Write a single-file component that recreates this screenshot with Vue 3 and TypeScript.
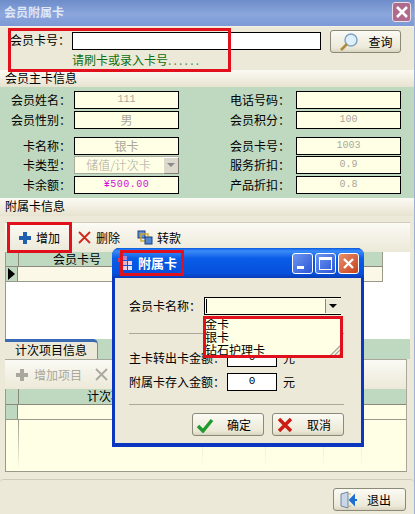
<script setup lang="ts">
type Field = { label: string; value: string; kind?: string };

const leftTop: Field[] = [
  { label: "会员姓名：", value: "111", kind: "mono" },
  { label: "会员性别：", value: "男" },
];
const rightTop: Field[] = [
  { label: "电话号码：", value: "" },
  { label: "会员积分：", value: "100", kind: "mono" },
];
const leftBottom: Field[] = [
  { label: "卡名称：", value: "银卡" },
  { label: "卡类型：", value: "储值/计次卡", kind: "combo" },
  { label: "卡余额：", value: "¥500.00", kind: "money" },
];
const rightBottom: Field[] = [
  { label: "会员卡号：", value: "1003", kind: "mono" },
  { label: "服务折扣：", value: "0.9", kind: "mono" },
  { label: "产品折扣：", value: "0.8", kind: "mono" },
];
const cardNames = ["金卡", "银卡", "钻石护理卡"];
// column rules that fade out at the bottom of the lower grid
const lowerColumns = [196, 259, 317, 355];
</script>

<template>
  <div class="win">
    <div class="titlebar">
      <span class="title-text">会员附属卡</span>
      <span class="close-main">
        <svg width="14" height="14" viewBox="0 0 14 14"><path d="M2 2 L12 12 M12 2 L2 12" stroke="#fff" stroke-width="2.6" /></svg>
      </span>
    </div>

    <div class="search">
      <div class="search-row">
        <span class="search-label">会员卡号：</span>
        <div class="search-input"></div>
        <button class="btn search-btn">
          <svg width="22" height="20" viewBox="0 0 22 20">
            <circle cx="13" cy="8" r="6" fill="#dff0fa" stroke="#7fa6c4" stroke-width="1.5" />
            <path d="M9 12 L3 18" stroke="#b08a3c" stroke-width="2.6" />
          </svg>
          <span>查询</span>
        </button>
      </div>
      <div class="hint">请刷卡或录入卡号<span class="dots">......</span></div>
    </div>

    <div class="section">会员主卡信息</div>
    <div class="main-info">
      <div class="info-col">
        <div class="info-group">
          <div v-for="f in leftTop" :key="f.label" class="info-row">
            <span class="info-label">{{ f.label }}</span>
            <span class="info-value" :class="f.kind">{{ f.value }}</span>
          </div>
        </div>
        <div class="info-group tight">
          <div v-for="f in leftBottom" :key="f.label" class="info-row">
            <span class="info-label">{{ f.label }}</span>
            <span class="info-value" :class="f.kind">
              {{ f.value }}
              <i v-if="f.kind === 'combo'" class="combo-arrow"></i>
            </span>
          </div>
        </div>
      </div>
      <div class="info-col right">
        <div class="info-group">
          <div v-for="f in rightTop" :key="f.label" class="info-row">
            <span class="info-label">{{ f.label }}</span>
            <span class="info-value" :class="f.kind">{{ f.value }}</span>
          </div>
        </div>
        <div class="info-group tight">
          <div v-for="f in rightBottom" :key="f.label" class="info-row">
            <span class="info-label">{{ f.label }}</span>
            <span class="info-value" :class="f.kind">{{ f.value }}</span>
          </div>
        </div>
      </div>
    </div>

    <div class="section sub">附属卡信息</div>
    <div class="toolbar top-tools">
      <span class="tool">
        <svg width="14" height="14" viewBox="0 0 14 14"><path d="M5 1 H9 V5 H13 V9 H9 V13 H5 V9 H1 V5 H5 Z" fill="#1f5fb0" /></svg>
        <span>增加</span>
      </span>
      <span class="tool">
        <svg width="15" height="15" viewBox="0 0 15 15"><path d="M2 2 L13 13 M13 2 L2 13" stroke="#d0281c" stroke-width="1.8" /></svg>
        <span>删除</span>
      </span>
      <span class="tool">
        <svg width="16" height="15" viewBox="0 0 16 15">
          <rect x="1" y="1" width="7" height="7" fill="#5f8fd4" stroke="#1f3f80" />
          <rect x="4" y="4" width="7" height="7" fill="none" stroke="#d8a81c" stroke-width="1.4" />
          <rect x="8" y="7" width="7" height="7" fill="#4f86d0" stroke="#1f3f80" />
        </svg>
        <span>转款</span>
      </span>
    </div>
    <div class="grid upper">
      <div class="grid-head"><i class="corner"></i><span class="col-a">会员卡号</span></div>
      <div class="grid-row"><i class="row-mark"><b class="arrow"></b></i></div>
    </div>

    <div class="tabs"><span class="tab">计次项目信息</span></div>
    <div class="toolbar lower-tools">
      <span class="tool off">
        <svg width="14" height="14" viewBox="0 0 14 14"><path d="M5 1 H9 V5 H13 V9 H9 V13 H5 V9 H1 V5 H5 Z" fill="#a9a89f" /></svg>
        <span>增加项目</span>
      </span>
      <span class="tool off">
        <svg width="15" height="15" viewBox="0 0 15 15"><path d="M2 2 L13 13 M13 2 L2 13" stroke="#a9a89f" stroke-width="1.8" /></svg>
        <span>删除</span>
      </span>
    </div>
    <div class="grid lower">
      <div class="grid-head"><i class="corner"></i><span class="col-b">计次项目</span></div>
      <div class="grid-row"><i class="row-mark"></i></div>
      <div class="row-rule"></div>
      <div v-for="x in lowerColumns" :key="x" class="row-rule pale" :style="{ left: x + 'px' }"></div>
    </div>

    <div class="footer">
      <button class="btn exit-btn">
        <svg width="20" height="18" viewBox="0 0 20 18">
          <path d="M2 3 L9 1 V17 L2 15 Z" fill="#c9d6e6" stroke="#6f86a8" />
          <path d="M10 3 H12 M10 15 H12" stroke="#d8a81c" />
          <path d="M18 9 H13 M15 5 L11 9 L15 13 Z" fill="#1f6fd0" stroke="#1f6fd0" stroke-width="2" />
        </svg>
        <span>退出</span>
      </button>
    </div>

    <div class="dialog">
      <div class="dlg-title">
        <svg width="16" height="16" viewBox="0 0 16 16">
          <rect x="1" y="3" width="4" height="4" fill="#d8365a" />
          <rect x="6" y="1" width="4" height="4" fill="#b08ac8" />
          <rect x="6" y="6" width="4" height="4" fill="#e6b4cc" />
          <rect x="11" y="6" width="4" height="4" fill="#f0d0e0" />
          <rect x="6" y="11" width="4" height="4" fill="#f0d0e0" />
          <rect x="11" y="11" width="4" height="4" fill="#dfe6f5" />
        </svg>
        <span class="dlg-name">附属卡</span>
        <span class="caps">
          <i class="cap"><b class="cap-min"></b></i>
          <i class="cap"><b class="cap-max"></b></i>
          <i class="cap cap-close">
            <svg width="13" height="13" viewBox="0 0 13 13"><path d="M2 2 L11 11 M11 2 L2 11" stroke="#fff" stroke-width="2.4" /></svg>
          </i>
        </span>
      </div>
      <div class="dlg-body">
        <div class="dlg-line name-line">
          <span class="dlg-label narrow">会员卡名称：</span>
          <div class="dlg-combo">
            <i class="caret"></i>
            <i class="dlg-arrow"></i>
            <div class="drop">
              <div v-for="n in cardNames" :key="n">{{ n }}</div>
              <svg class="grip" width="14" height="14" viewBox="0 0 14 14"><path d="M14 1 L1 14 M14 5 L5 14 M14 9 L9 14" stroke="#a8a89c" stroke-width="1.4" /></svg>
            </div>
          </div>
        </div>
        <div class="rule first-rule"></div>
        <div class="dlg-line amount">
          <span class="dlg-label">主卡转出卡金额：</span>
          <span class="amount-box">0</span>
          <span class="unit">元</span>
        </div>
        <div class="dlg-line amount">
          <span class="dlg-label">附属卡存入金额：</span>
          <span class="amount-box">0</span>
          <span class="unit">元</span>
        </div>
        <div class="rule second-rule"></div>
        <div class="dlg-actions">
          <button class="btn dlg-btn">
            <svg width="18" height="16" viewBox="0 0 18 16"><path d="M2 9 L7 14 L16 3" fill="none" stroke="#1f9a2c" stroke-width="3.4" /></svg>
            <span>确定</span>
          </button>
          <button class="btn dlg-btn">
            <svg width="18" height="16" viewBox="0 0 18 16"><path d="M3 2 L15 14 M15 2 L3 14" stroke="#cc1c14" stroke-width="3.4" /></svg>
            <span>取消</span>
          </button>
        </div>
      </div>
    </div>

    <i class="mark mark-search"></i>
    <i class="mark mark-add"></i>
    <i class="mark mark-title"></i>
    <i class="mark mark-list"></i>
  </div>
</template>

<style scoped>
.win {
  position: relative;
  width: 415px;
  height: 514px;
  box-sizing: border-box;
  overflow: hidden;
  display: flex;
  flex-direction: column;
  background: #ece9d8;
  border-right: 1px solid #9fb0d4;
  color: #000;
  font: 12px/14px "Noto Sans CJK SC", "Liberation Sans", sans-serif;
}
.titlebar {
  flex: 0 0 26px;
  display: flex;
  align-items: center;
  justify-content: space-between;
  padding: 0 3px 2px 4px;
  box-sizing: border-box;
  background: linear-gradient(#6d8cc9, #8ba6dc 55%, #7d99d6);
}
.title-text {
  color: #dfe6f6;
  font-size: 12px;
  font-weight: 700;
}
.close-main {
  width: 19px;
  height: 20px;
  box-sizing: border-box;
  display: flex;
  align-items: center;
  justify-content: center;
  border: 1px solid #e8dfe6;
  border-radius: 3px;
  background: #b06a8c;
}
.search {
  flex: 0 0 44px;
  box-sizing: border-box;
  padding: 4px 13px 0 10px;
  border-top: 1px solid #f4f2e8;
}
.search-row {
  display: flex;
  align-items: flex-start;
  height: 21px;
}
.search-label {
  width: 62px;
  padding-top: 2px;
}
.search-input {
  width: 249px;
  height: 18px;
  box-sizing: border-box;
  margin-top: 1px;
  border: 1px solid #000;
  background: #fff;
}
.search-btn {
  width: 71px;
  height: 23px;
  margin-left: 9px;
  margin-top: -1px;
  padding-left: 3px;
  justify-content: flex-start;
  gap: 8px;
}
.hint {
  margin: 1px 0 0 62px;
  color: #0a7010;
}
.dots {
  letter-spacing: 2.2px;
  color: #5f8f60;
}
.btn {
  display: flex;
  align-items: center;
  justify-content: center;
  padding: 0;
  border: 1px solid #8a8a78;
  border-radius: 3px;
  background: linear-gradient(#fbfaf4, #ece9d8 80%, #d8d4c0);
  color: #000;
  font: inherit;
}
.section {
  flex: 0 0 17px;
  padding-left: 5px;
  line-height: 16px;
  background: linear-gradient(#fbfaf3, #e8e3d0);
}
.section.sub {
  flex-basis: 18px;
}
.main-info {
  flex: 0 0 111px;
  box-sizing: border-box;
  padding: 4px 13px 0 11px;
  display: flex;
  justify-content: space-between;
  background: #bfd9c0;
}
.info-col {
  display: flex;
  flex-direction: column;
  gap: 8px;
}
.info-group {
  display: flex;
  flex-direction: column;
  gap: 2px;
}
.info-group.tight {
  gap: 1px;
}
.info-group.tight .info-row:last-child {
  margin-top: 1px;
}
.info-row {
  display: flex;
  align-items: center;
  justify-content: flex-end;
  height: 18px;
}
.info-label {
  padding-right: 3px;
}
.info-col.right .info-label {
  padding-right: 6px;
}
.info-value {
  position: relative;
  width: 105px;
  height: 18px;
  box-sizing: border-box;
  border: 1px solid #000;
  background: #ffffe6;
  color: #a8a89c;
  text-align: center;
  line-height: 15px;
}
.info-value.mono {
  font: 10px/15px "Liberation Mono", monospace;
}
.info-value.combo {
  border-color: #a8a89c;
  padding-right: 16px;
  font-weight: 300;
}
.info-value.money {
  color: #d010d8;
  font: 10px/15px "Liberation Mono", monospace;
  letter-spacing: 0.5px;
}
.combo-arrow {
  position: absolute;
  right: -1px;
  top: 0;
  width: 16px;
  height: 17px;
  box-sizing: border-box;
  border: 1px solid;
  border-color: #fff #808078 #808078 #fff;
  background: #ddd9cc;
}
.combo-arrow::after {
  content: "";
  position: absolute;
  left: 3px;
  top: 5px;
  border: 4px solid transparent;
  border-top: 4px solid #8a8a8a;
}
.toolbar {
  display: flex;
  align-items: center;
  background: linear-gradient(#fbfaf4, #ece9d8);
}
.top-tools {
  flex: 0 0 30px;
  margin: 6px 4px 0 5px;
  padding-left: 13px;
  gap: 17px;
  border-top: 1px solid #d0ccba;
  box-sizing: border-box;
}
.top-tools .tool {
  gap: 4px;
}
.lower-tools {
  flex: 0 0 30px;
  margin: 0 7px 0 5px;
  padding-left: 10px;
  gap: 12px;
  border-top: 1px solid #a8a89c;
  border-right: 1px solid #a8a89c;
  box-sizing: border-box;
}
.tool {
  display: flex;
  align-items: center;
  gap: 5px;
}
.tool.off {
  color: #a8a89c;
}
.grid {
  margin: 0 4px 0 5px;
  box-sizing: border-box;
  border-left: 1px solid #9a9a8c;
}
.grid.upper {
  flex: 0 0 87px;
  background: #fff;
}
.grid.upper .grid-head,
.grid.upper .grid-row {
  width: 377px;
  box-sizing: border-box;
  border-right: 1px solid #9a9a8c;
}
.grid.upper .grid-row {
  height: 15px;
  background: #fbf8e8;
}
.grid.lower {
  position: relative;
  margin-right: 7px;
  flex: 0 0 83px;
  background: #ffffe6;
  border-bottom: 1px solid #9a9a8c;
  border-right: 1px solid #a8a89c;
}
.grid-head {
  display: flex;
  height: 15px;
  line-height: 14px;
  background: #bfd9c0;
  border-bottom: 1px solid #8a8a7c;
}
.corner {
  flex: 0 0 12px;
  border-right: 1px solid #8a8a7c;
}
.col-a {
  margin-left: 34px;
}
.col-b {
  margin-left: 68px;
}
.grid-row {
  display: flex;
  height: 14px;
  border-bottom: 1px solid #9a9a8c;
}
.row-mark {
  flex: 0 0 12px;
  display: flex;
  align-items: center;
  padding-left: 2px;
  box-sizing: border-box;
  background: #bfd9c0;
  border-right: 1px solid #8a8a7c;
}
.arrow {
  border: 6px solid transparent;
  border-left: 7px solid #000;
  border-right: 0;
}
.row-rule {
  position: absolute;
  left: 12px;
  top: 30px;
  width: 1px;
  height: 50px;
  background: linear-gradient(#9a9a8c, #ffffe6);
}
.row-rule.pale {
  background: linear-gradient(#dcdcc8, #ffffe6);
}
.tabs {
  flex: 0 0 20px;
  display: flex;
  margin: 0 4px 0 5px;
  background: #bfd9c0;
}
.tab {
  width: 93px;
  box-sizing: border-box;
  border-top: 3px solid #3a6ab4;
  border-right: 1px solid #8a8a7c;
  border-top-right-radius: 5px;
  background: #ece9d8;
  padding-left: 10px;
  line-height: 16px;
}
.footer {
  flex: 1;
  margin-top: 7px;
  display: flex;
  justify-content: flex-end;
  padding: 8px 8px 0 0;
  border-top: 1px solid #d0ccba;
  border-radius: 4px 4px 0 0;
}
.exit-btn {
  width: 73px;
  height: 23px;
  padding-left: 5px;
  justify-content: flex-start;
  gap: 8px;
}
.dialog {
  position: absolute;
  left: 112px;
  top: 248px;
  width: 252px;
  height: 199px;
  box-sizing: border-box;
  display: flex;
  flex-direction: column;
  border-radius: 7px 7px 0 0;
  background: #0831d9;
  border: solid #0a36c0;
  border-width: 0 3px 4px 3px;
}
.dlg-title {
  flex: 0 0 30px;
  display: flex;
  align-items: center;
  padding: 0 2px 0 5px;
  margin: 0 -3px;
  gap: 5px;
  border-radius: 7px 7px 0 0;
  background: linear-gradient(#0a5ae0, #3a8cf8 10%, #0a5ce6 35%, #0650dc 85%, #0a3ab4);
}
.dlg-name {
  color: #fff;
  font-weight: 700;
  font-size: 13px;
}
.caps {
  margin-left: auto;
  display: flex;
  gap: 2px;
  padding-right: 3px;
}
.cap {
  position: relative;
  width: 21px;
  height: 21px;
  box-sizing: border-box;
  display: flex;
  align-items: center;
  justify-content: center;
  border: 1px solid #fff;
  border-radius: 3px;
  background: linear-gradient(135deg, #6f96ee, #2a56d8);
}
.cap-close {
  background: linear-gradient(135deg, #e8906c, #c8401c);
}
.cap-min {
  position: absolute;
  left: 4px;
  bottom: 4px;
  width: 7px;
  height: 3px;
  background: #fff;
}
.cap-max {
  width: 11px;
  height: 9px;
  border: 1px solid #fff;
  border-top-width: 3px;
}
.dlg-body {
  flex: 1;
  background: #ece9d8;
  padding: 19px 17px 0 14px;
  display: flex;
  flex-direction: column;
}
.dlg-line {
  display: flex;
  align-items: center;
  height: 18px;
}
.dlg-label {
  flex: 0 0 98px;
  white-space: nowrap;
}
.dlg-label.narrow {
  flex-basis: 75px;
}
.unit {
  margin-left: 6px;
}
.dlg-combo {
  position: relative;
  z-index: 1;
  width: 137px;
  height: 18px;
  box-sizing: border-box;
  border: 1px solid #000;
  border-right: 0;
  background: #ffffe6;
}
.caret {
  position: absolute;
  left: 1px;
  top: 1px;
  width: 1px;
  height: 14px;
  background: #000;
}
.dlg-arrow {
  position: absolute;
  right: 0;
  top: 1px;
  width: 15px;
  height: 14px;
  background: #ece9d8;
  border-left: 1px solid #8a8a7c;
}
.dlg-arrow::after {
  content: "";
  position: absolute;
  left: 3px;
  top: 5px;
  border: 4px solid transparent;
  border-top: 4px solid #000;
}
.drop {
  position: absolute;
  left: -1px;
  top: 19px;
  width: 137px;
  height: 41px;
  padding-left: 1px;
  box-sizing: border-box;
  background: #ffffe6;
  line-height: 13px;
}
.grip {
  position: absolute;
  right: 0;
  bottom: 0;
}
.rule {
  height: 1px;
  background: #a8a89c;
}
.first-rule {
  margin-top: 18px;
  margin-bottom: 15px;
}
.amount {
  margin-bottom: 6px;
}
.amount-box {
  width: 50px;
  height: 18px;
  box-sizing: border-box;
  border: 1px solid #000;
  background: #fff;
  text-align: center;
  font: 11px/15px "Liberation Mono", monospace;
}
.second-rule {
  margin-top: 7px;
}
.dlg-actions {
  display: flex;
  justify-content: flex-end;
  gap: 8px;
  margin-top: 8px;
}
.dlg-btn {
  width: 72px;
  height: 23px;
  padding-left: 3px;
  justify-content: flex-start;
  gap: 13px;
}
.mark {
  position: absolute;
  z-index: 2;
  box-sizing: border-box;
  border: 3px solid #e0101c;
  pointer-events: none;
}
.mark-search {
  left: 8px;
  top: 28px;
  width: 223px;
  height: 44px;
}
.mark-add {
  left: 7px;
  top: 222px;
  width: 65px;
  height: 31px;
}
.mark-title {
  left: 120px;
  top: 250px;
  width: 64px;
  height: 26px;
}
.mark-list {
  left: 203px;
  top: 316px;
  width: 140px;
  height: 42px;
}
</style>
